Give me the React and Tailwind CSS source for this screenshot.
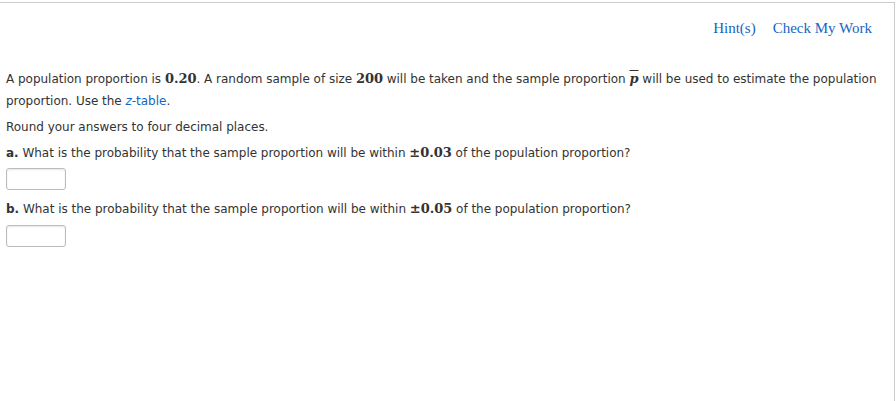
export default function App() {
  const math = { fontFamily: '"DejaVu Serif", "Liberation Serif", serif' }
  return (
    <div className="w-[896px] h-[401px] bg-white overflow-hidden">
      <div className="mt-[2px] w-[895px] h-[399px] border-t border-r border-[#cccccc]">
        <div
          className="flex justify-end gap-[17px] pr-[22px] pt-[14px] text-[15px] text-[#1466c2]"
          style={{ fontFamily: '"Liberation Serif", serif' }}
        >
          <span>Hint(s)</span>
          <span>Check My Work</span>
        </div>
        <div
          className="px-[6px] pt-[28px] text-[12px] text-[#333333] leading-[22px] tracking-[-0.02px]"
          style={{ fontFamily: '"DejaVu Sans", Verdana, sans-serif' }}
        >
          <p>
            A population proportion is <b className="text-[13px] leading-none font-semibold" style={math}>0.20</b>. A random sample of size{' '}
            <b className="text-[13px] leading-none font-semibold" style={math}>200</b> will be taken and the sample proportion{' '}
            <i className="text-[13px] leading-none font-bold overline" style={math}>p</i> will be used to estimate the population
            proportion. Use the <span className="text-[#1466c2]"><i>z</i>-table</span>.
          </p>
          <p className="mt-[4px]">Round your answers to four decimal places.</p>
          <p className="mt-[4px]">
            <b>a.</b> What is the probability that the sample proportion will be within{' '}
            <b className="text-[13px] leading-none font-semibold" style={math}>±0.03</b> of the population proportion?
          </p>
          <div className="mt-[4px] w-[60px] h-[22px] border border-[#bbbbbb] rounded-[3px] shadow-[inset_0_1px_2px_rgba(0,0,0,0.1)]" />
          <p className="mt-[8px]">
            <b>b.</b> What is the probability that the sample proportion will be within{' '}
            <b className="text-[13px] leading-none font-semibold" style={math}>±0.05</b> of the population proportion?
          </p>
          <div className="mt-[5px] w-[60px] h-[22px] border border-[#bbbbbb] rounded-[3px] shadow-[inset_0_1px_2px_rgba(0,0,0,0.1)]" />
        </div>
      </div>
    </div>
  )
}
